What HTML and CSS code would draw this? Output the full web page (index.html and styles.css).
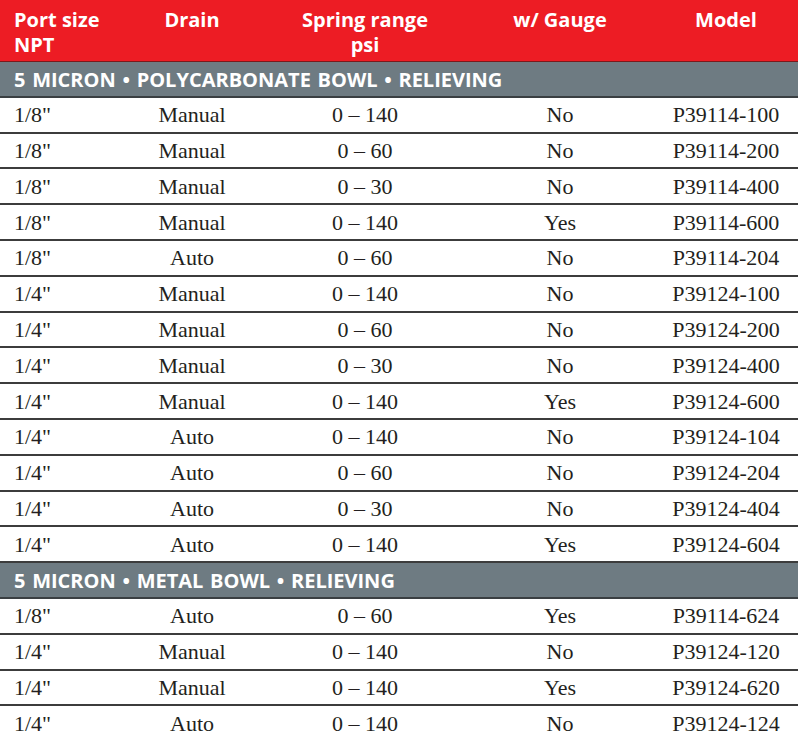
FILE: index.html
```html
<!DOCTYPE html>
<html>
<head>
<meta charset="utf-8">
<link rel="stylesheet" href="styles.css">
</head>
<body>
<div class="table">
  <div class="thead">
    <div class="th left">Port size<br>NPT</div>
    <div class="th">Drain</div>
    <div class="th">Spring range<br>psi</div>
    <div class="th">w/ Gauge</div>
    <div class="th">Model</div>
  </div>

  <div class="section">5 MICRON • POLYCARBONATE BOWL • RELIEVING</div>
  <div class="row"><div class="left">1/8"</div><div>Manual</div><div>0 – 140</div><div>No</div><div>P39114-100</div></div>
  <div class="row"><div class="left">1/8"</div><div>Manual</div><div>0 – 60</div><div>No</div><div>P39114-200</div></div>
  <div class="row"><div class="left">1/8"</div><div>Manual</div><div>0 – 30</div><div>No</div><div>P39114-400</div></div>
  <div class="row"><div class="left">1/8"</div><div>Manual</div><div>0 – 140</div><div>Yes</div><div>P39114-600</div></div>
  <div class="row"><div class="left">1/8"</div><div>Auto</div><div>0 – 60</div><div>No</div><div>P39114-204</div></div>
  <div class="row"><div class="left">1/4"</div><div>Manual</div><div>0 – 140</div><div>No</div><div>P39124-100</div></div>
  <div class="row"><div class="left">1/4"</div><div>Manual</div><div>0 – 60</div><div>No</div><div>P39124-200</div></div>
  <div class="row"><div class="left">1/4"</div><div>Manual</div><div>0 – 30</div><div>No</div><div>P39124-400</div></div>
  <div class="row"><div class="left">1/4"</div><div>Manual</div><div>0 – 140</div><div>Yes</div><div>P39124-600</div></div>
  <div class="row"><div class="left">1/4"</div><div>Auto</div><div>0 – 140</div><div>No</div><div>P39124-104</div></div>
  <div class="row"><div class="left">1/4"</div><div>Auto</div><div>0 – 60</div><div>No</div><div>P39124-204</div></div>
  <div class="row"><div class="left">1/4"</div><div>Auto</div><div>0 – 30</div><div>No</div><div>P39124-404</div></div>
  <div class="row"><div class="left">1/4"</div><div>Auto</div><div>0 – 140</div><div>Yes</div><div>P39124-604</div></div>

  <div class="section">5 MICRON • METAL BOWL • RELIEVING</div>
  <div class="row"><div class="left">1/8"</div><div>Auto</div><div>0 – 60</div><div>Yes</div><div>P39114-624</div></div>
  <div class="row"><div class="left">1/4"</div><div>Manual</div><div>0 – 140</div><div>No</div><div>P39124-120</div></div>
  <div class="row"><div class="left">1/4"</div><div>Manual</div><div>0 – 140</div><div>Yes</div><div>P39124-620</div></div>
  <div class="row"><div class="left">1/4"</div><div>Auto</div><div>0 – 140</div><div>No</div><div>P39124-124</div></div>
</div>
</body>
</html>
```

FILE: styles.css
```css
html, body {
  margin: 0;
  padding: 0;
  background: #ffffff;
}

.table {
  width: 798px;
}

.thead,
.row {
  display: grid;
  grid-template-columns: 120px 144px 202px 188px 1fr;
}

.thead {
  box-sizing: border-box;
  height: 62px;
  padding-top: 7px;
  background: #ed1c24;
  border-bottom: 1px solid #7a1a1c;
  color: #ffffff;
  font-family: "Open Sans", "Noto Sans", sans-serif;
  font-weight: 700;
  font-size: 20px;
  line-height: 25px;
}

.th {
  text-align: center;
}

.left {
  text-align: left;
  padding-left: 14px;
}

.section {
  box-sizing: border-box;
  height: 35.8px;
  display: flex;
  align-items: center;
  padding-left: 14px;
  padding-top: 1px;
  background: #6e7b82;
  border-bottom: 2px solid #3a3f42;
  color: #ffffff;
  font-family: "Open Sans", "Noto Sans", sans-serif;
  font-weight: 700;
  font-size: 20px;
  word-spacing: 1.5px;
}

.row {
  box-sizing: border-box;
  height: 35.8px;
  align-items: center;
  padding-top: 1px;
  border-bottom: 2px solid #3c3c3c;
  color: #231f20;
  font-family: "Liberation Serif", "Times New Roman", serif;
  font-size: 22px;
  text-align: center;
}
```
